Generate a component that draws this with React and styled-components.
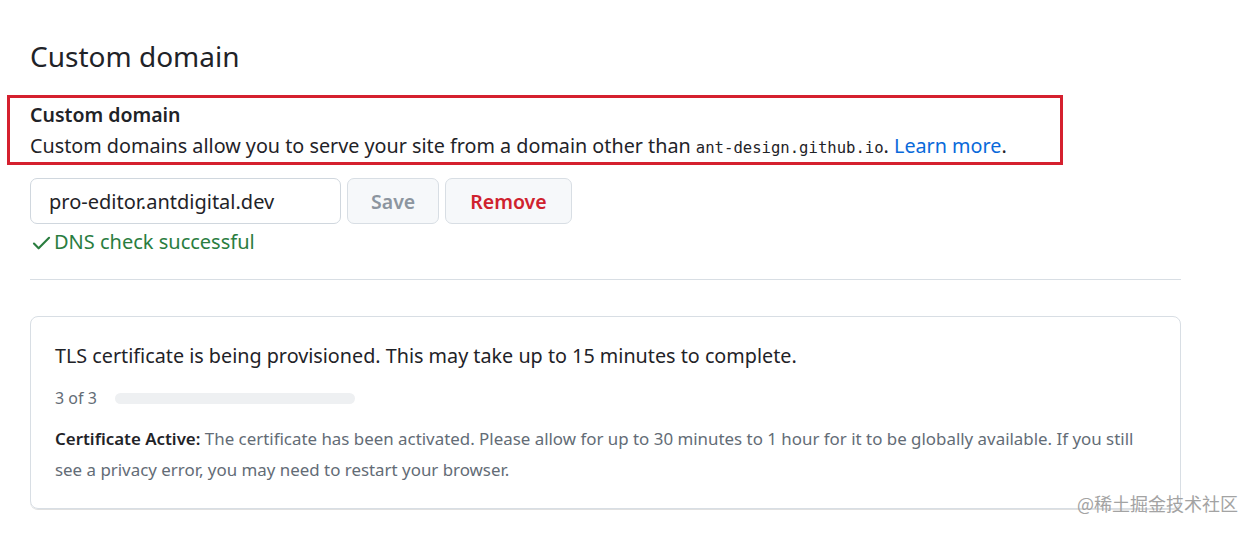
import React from 'react';
import styled, { createGlobalStyle } from 'styled-components';

const GlobalStyle = createGlobalStyle`
  html, body {
    margin: 0;
    padding: 0;
    background: #fff;
  }
  body {
    font-family: "Noto Sans", "Open Sans", sans-serif;
    color: #1f2328;
  }
`;

const Page = styled.div`
  position: relative;
  width: 1255px;
  height: 533px;
  padding: 36px 74px 0 30px;
  box-sizing: border-box;
`;

const Title = styled.h2`
  margin: 0 0 19px;
  font-size: 28px;
  font-weight: 400;
  line-height: 40px;
`;

const Highlight = styled.div`
  margin: 0 0 13px -23px;
  width: 1056px;
  box-sizing: border-box;
  border: 3px solid #d5202f;
  padding: 4px 20px 0;
`;

const Label = styled.div`
  margin-bottom: 4px;
  font-size: 19.5px;
  font-weight: 600;
  line-height: 26px;
`;

const Note = styled.p`
  margin: 0;
  font-size: 19.75px;
  line-height: 28px;
`;

const Code = styled.code`
  font-family: "DejaVu Sans Mono", "Liberation Mono", monospace;
  font-size: 15.6px;
`;

const Link = styled.a`
  color: #0969da;
  text-decoration: none;
`;

const FormRow = styled.div`
  display: flex;
  gap: 6px;
`;

const Input = styled.input`
  width: 311px;
  height: 46px;
  box-sizing: border-box;
  border: 1px solid #d0d7de;
  border-radius: 7px;
  padding: 0 18px;
  font-family: inherit;
  font-size: 20px;
  color: #1f2328;
  outline: none;
`;

const Button = styled.button`
  height: 46px;
  padding: 0 ${({ wide }) => (wide ? '24px' : '23px')};
  box-sizing: border-box;
  border: 1px solid #d8dee4;
  border-radius: 7px;
  background: #f6f8fa;
  font-family: inherit;
  font-size: 19.5px;
  font-weight: 600;
  color: ${({ danger }) => (danger ? '#cf222e' : '#8c959f')};
`;

const Success = styled.div`
  display: flex;
  align-items: center;
  gap: 1px;
  margin-top: 4px;
  color: #2a7d3f;
  font-size: 20px;
  line-height: 28px;
`;

const Divider = styled.hr`
  margin: 23px 0 36px;
  border: 0;
  border-top: 1px solid #d8dee4;
  width: 1151px;
`;

const Card = styled.div`
  width: 1151px;
  box-sizing: border-box;
  border: 1px solid #d8dee4;
  border-radius: 8px;
  box-shadow: 0 1px 0 rgba(0, 0, 0, 0.12);
  padding: 25px 24px 23px;
`;

const CardTitle = styled.p`
  margin: 0 0 16px;
  font-size: 19.75px;
  line-height: 28px;
`;

const Progress = styled.div`
  display: flex;
  align-items: center;
  gap: 18px;
  color: #636c76;
  font-size: 16px;
  line-height: 24px;
  margin-bottom: 13px;
`;

const Bar = styled.div`
  width: 240px;
  height: 11px;
  border-radius: 6px;
  background: #eef0f2;
`;

const Detail = styled.p`
  margin: 0;
  font-size: 16.9px;
  line-height: 31px;
  color: #636c76;

  strong {
    color: #1f2328;
    font-weight: 600;
  }
`;

const Watermark = styled.div`
  position: absolute;
  right: 17px;
  bottom: 17px;
  font-family: "Noto Sans CJK SC", sans-serif;
  font-size: 18px;
  color: #a3a3a3;
`;

const Check = () => (
  <svg width="23" height="23" viewBox="0 0 16 16" fill="currentColor">
    <path d="M13.78 4.22a.75.75 0 0 1 0 1.06l-7.25 7.25a.75.75 0 0 1-1.06 0L2.22 9.28a.75.75 0 0 1 1.06-1.06L6 10.94l6.72-6.72a.75.75 0 0 1 1.06 0Z" />
  </svg>
);

export default function App() {
  return (
    <>
      <GlobalStyle />
      <Page>
        <Title>Custom domain</Title>
        <Highlight>
          <Label>Custom domain</Label>
          <Note>
            Custom domains allow you to serve your site from a domain other than{' '}
            <Code>ant-design.github.io</Code>. <Link href="#">Learn more</Link>.
          </Note>
        </Highlight>
        <FormRow>
          <Input defaultValue="pro-editor.antdigital.dev" />
          <Button>Save</Button>
          <Button danger wide>Remove</Button>
        </FormRow>
        <Success>
          <Check />
          DNS check successful
        </Success>
        <Divider />
        <Card>
          <CardTitle>
            TLS certificate is being provisioned. This may take up to 15 minutes to complete.
          </CardTitle>
          <Progress>
            3 of 3
            <Bar />
          </Progress>
          <Detail>
            <strong>Certificate Active:</strong> The certificate has been activated. Please allow
            for up to 30 minutes to 1 hour for it to be globally available. If you still see a
            privacy error, you may need to restart your browser.
          </Detail>
        </Card>
        <Watermark>@稀土掘金技术社区</Watermark>
      </Page>
    </>
  );
}
